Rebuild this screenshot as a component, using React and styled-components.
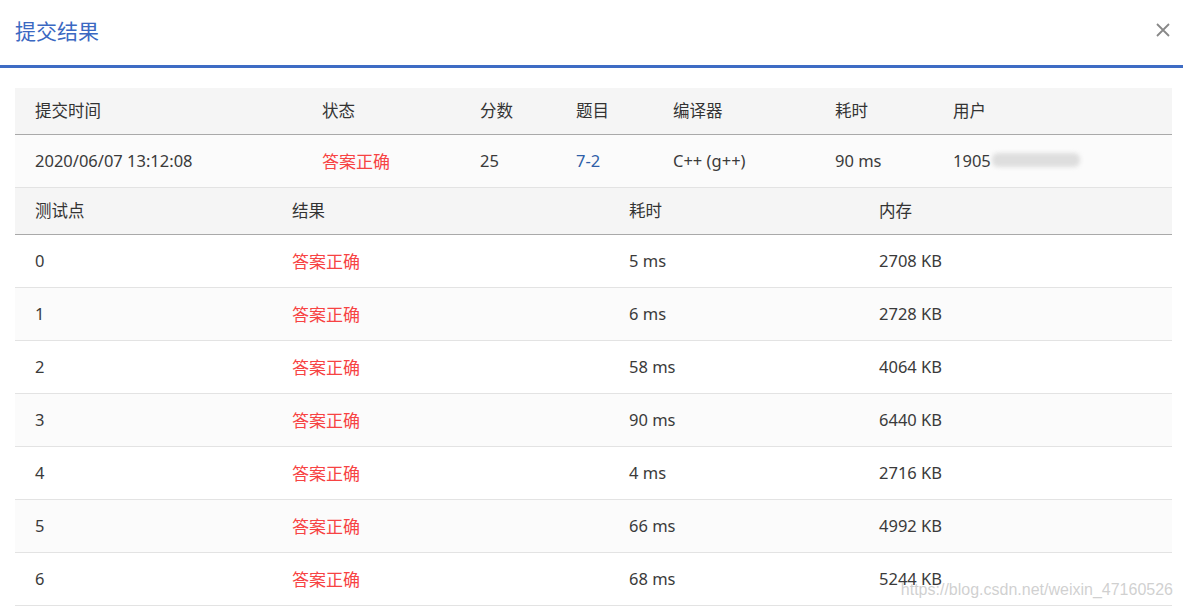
import React from 'react';
import styled, { createGlobalStyle } from 'styled-components';

const GlobalStyle = createGlobalStyle`
  html, body {
    margin: 0;
    padding: 0;
    background: #fff;
    font-family: "Noto Sans", "Noto Sans CJK SC", sans-serif;
    color: #333;
  }
`;

const Page = styled.div`
  position: relative;
  width: 1183px;
  height: 608px;
  overflow: hidden;
`;

const Header = styled.div`
  height: 68px;
  box-sizing: border-box;
  border-bottom: 3px solid #3e6cc4;
  display: flex;
  align-items: center;
  justify-content: space-between;
  padding: 0 12px 6px 15px;
`;

const Title = styled.h2`
  margin: 0;
  font-family: "Noto Sans CJK SC", sans-serif;
  font-weight: 400;
  font-size: 21px;
  color: #3b68c2;
`;

const Close = styled.button`
  border: none;
  background: none;
  padding: 0;
  width: 16px;
  height: 16px;
  display: flex;
  cursor: pointer;
`;

const Body = styled.div`
  padding: 20px 11px 0 15px;
`;

const Grid = styled.div`
  display: grid;
  grid-template-columns: ${p => p.cols};
`;

const HeadCell = styled.div`
  background: #f5f5f5;
  height: 47px;
  box-sizing: border-box;
  padding: 0 0 3px 20px;
  border-bottom: 1px solid #a9a9a9;
  display: flex;
  align-items: center;
  font-family: "Noto Sans CJK SC", sans-serif;
  font-size: 16.5px;
  color: #333;
`;

const Cell = styled.div`
  background: ${p => (p.alt ? '#fbfbfb' : '#fff')};
  height: 53px;
  box-sizing: border-box;
  padding: 0 0 2px 20px;
  border-bottom: 1px solid #e3e3e3;
  display: flex;
  align-items: center;
  font-size: ${p => (p.cjk ? '17px' : '16.5px')};
  color: ${p => p.color || '#3a3a3a'};
  font-family: ${p => (p.cjk ? '"Noto Sans CJK SC", sans-serif' : '"Noto Sans", "Noto Sans CJK SC", sans-serif')};
  white-space: nowrap;
`;

const Blur = styled.span`
  display: inline-block;
  width: 88px;
  height: 14px;
  margin-left: 1px;
  border-radius: 6px;
  background: #dedede;
  filter: blur(2px);
`;

const Watermark = styled.div`
  position: absolute;
  right: 10px;
  bottom: 9px;
  font-family: "Liberation Sans", sans-serif;
  font-size: 16px;
  color: rgba(200, 200, 200, 0.85);
`;

const summaryCols = '287px 158px 96px 97px 162px 118px 239px';
const caseCols = '257px 337px 250px 313px';

const cases = [
  ['0', '5 ms', '2708 KB'],
  ['1', '6 ms', '2728 KB'],
  ['2', '58 ms', '4064 KB'],
  ['3', '90 ms', '6440 KB'],
  ['4', '4 ms', '2716 KB'],
  ['5', '66 ms', '4992 KB'],
  ['6', '68 ms', '5244 KB'],
];

const RED = '#f74343';

export default function App() {
  return (
    <Page>
      <GlobalStyle />
      <Header>
        <Title>提交结果</Title>
        <Close aria-label="close">
          <svg width="16" height="16" viewBox="0 0 16 16">
            <path d="M2 2L14 14M14 2L2 14" stroke="#888" strokeWidth="1.8" />
          </svg>
        </Close>
      </Header>
      <Body>
        <Grid cols={summaryCols}>
          {['提交时间', '状态', '分数', '题目', '编译器', '耗时', '用户'].map(h => (
            <HeadCell key={h}>{h}</HeadCell>
          ))}
          <Cell alt>2020/06/07 13:12:08</Cell>
          <Cell alt cjk color={RED}>答案正确</Cell>
          <Cell alt>25</Cell>
          <Cell alt color="#2f5fa8">7-2</Cell>
          <Cell alt>C++ (g++)</Cell>
          <Cell alt>90 ms</Cell>
          <Cell alt>1905<Blur /></Cell>
        </Grid>
        <Grid cols={caseCols}>
          {['测试点', '结果', '耗时', '内存'].map(h => (
            <HeadCell key={h}>{h}</HeadCell>
          ))}
          {cases.map(([id, time, mem], i) => (
            <React.Fragment key={id}>
              <Cell alt={i % 2 === 1}>{id}</Cell>
              <Cell alt={i % 2 === 1} cjk color={RED}>答案正确</Cell>
              <Cell alt={i % 2 === 1}>{time}</Cell>
              <Cell alt={i % 2 === 1}>{mem}</Cell>
            </React.Fragment>
          ))}
        </Grid>
      </Body>
      <Watermark>https://blog.csdn.net/weixin_47160526</Watermark>
    </Page>
  );
}
